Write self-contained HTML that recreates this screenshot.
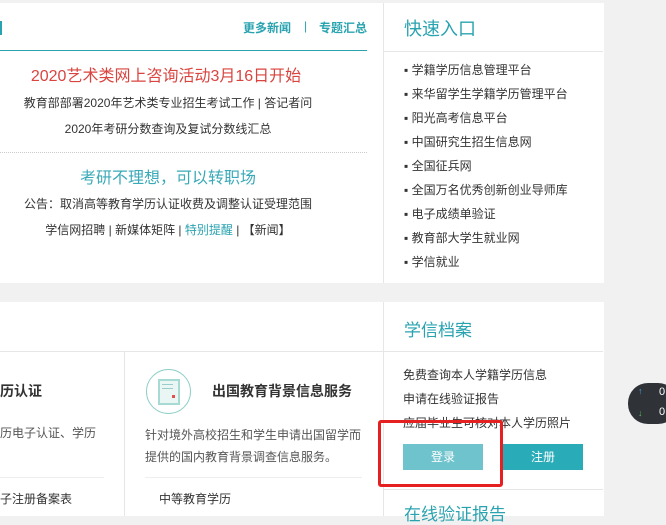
<!DOCTYPE html><html><head><meta charset="utf-8"><style>
body{margin:0;width:666px;height:516px;background:#f1f1f1;position:relative;overflow:hidden;font-family:"Liberation Sans","Noto Sans CJK SC",sans-serif;color:#333;font-size:12px}
.a{position:absolute;white-space:nowrap}
.w{position:absolute;background:#fff}
.c{text-align:center}
.t{color:#2aa3b0}
</style></head><body>
<div class="w" style="left:0;top:3px;width:383px;height:280px"></div>
<div class="w" style="left:383px;top:3px;width:220px;height:280px;border-left:1px solid #e6e6e6"></div>
<div class="a" style="left:0;top:21px;width:2px;height:14px;background:#2aa3b0"></div>
<div class="a t" style="left:243px;top:19px;font-size:12px;font-weight:bold">更多新闻</div>
<div class="a t" style="left:304px;top:19px">|</div>
<div class="a t" style="left:319px;top:19px;font-weight:bold">专题汇总</div>
<div class="a" style="left:0;top:50px;width:367px;height:1px;background:#2aa3b0"></div>
<div class="a c" style="left:0;width:332px;top:62px;font-size:16px;color:#d9443f">2020艺术类网上咨询活动3月16日开始</div>
<div class="a c" style="left:0;width:336px;top:94px">教育部部署2020年艺术类专业招生考试工作 | 答记者问</div>
<div class="a c" style="left:0;width:336px;top:120px">2020年考研分数查询及复试分数线汇总</div>
<div class="a" style="left:0;top:152px;width:367px;border-top:1px dotted #ccc"></div>
<div class="a c t" style="left:0;width:336px;top:164px;font-size:16px;color:#3aa9b8">考研不理想，可以转职场</div>
<div class="a c" style="left:0;width:336px;top:195px">公告：取消高等教育学历认证收费及调整认证受理范围</div>
<div class="a c" style="left:0;width:336px;top:221px">学信网招聘 | 新媒体矩阵 | <span class="t">特别提醒</span> | 【新闻】</div>
<div class="a t" style="left:404px;top:15px;font-size:18px">快速入口</div>
<div class="a" style="left:384px;top:51px;width:219px;height:1px;background:#e6e6e6"></div>
<div class="a" style="left:404px;top:58px;line-height:24px">
<div>▪ 学籍学历信息管理平台</div><div>▪ 来华留学生学籍学历管理平台</div><div>▪ 阳光高考信息平台</div><div>▪ 中国研究生招生信息网</div><div>▪ 全国征兵网</div><div>▪ 全国万名优秀创新创业导师库</div><div>▪ 电子成绩单验证</div><div>▪ 教育部大学生就业网</div><div>▪ 学信就业</div></div>

<div class="w" style="left:0;top:302px;width:383px;height:214px"></div>
<div class="w" style="left:383px;top:302px;width:220px;height:214px;border-left:1px solid #e6e6e6"></div>
<div class="a" style="left:0;top:351px;width:603px;height:1px;background:#e6e6e6"></div>
<div class="a" style="left:124px;top:352px;width:1px;height:164px;background:#e6e6e6"></div>
<div class="a" style="left:0;top:381px;font-size:14px;font-weight:bold">历认证</div>
<div class="a" style="left:0;top:424px;color:#555">历电子认证、学历</div>
<div class="a" style="left:0;top:477px;width:104px;height:1px;background:#eee"></div>
<div class="a" style="left:0;top:490px">子注册备案表</div>
<div class="a" style="left:146px;top:369px;width:43px;height:43px;border:1px solid #8fcfc8;border-radius:50%"></div>
<div class="a" style="left:158px;top:379px;width:18px;height:22px;border:2px solid #a8dad4;background:#eaf6f4"></div>
<div class="a" style="left:162px;top:384px;width:11px;height:1px;background:#9cc"></div>
<div class="a" style="left:162px;top:388px;width:11px;height:1px;background:#9cc"></div>
<div class="a" style="left:172px;top:395px;width:3px;height:3px;background:#e05050"></div>
<div class="a" style="left:212px;top:381px;font-size:14px;font-weight:bold">出国教育背景信息服务</div>
<div class="a" style="left:145px;top:424px;color:#555;line-height:22px">针对境外高校招生和学生申请出国留学而<br>提供的国内教育背景调查信息服务。</div>
<div class="a" style="left:145px;top:477px;width:217px;height:1px;background:#eee"></div>
<div class="a" style="left:159px;top:490px">中等教育学历</div>
<div class="a t" style="left:404px;top:316px;font-size:17px">学信档案</div>
<div class="a" style="left:403px;top:363px;line-height:24px"><div>免费查询本人学籍学历信息</div><div>申请在线验证报告</div><div>应届毕业生可核对本人学历照片</div></div>
<div class="a c" style="left:403px;top:444px;width:80px;height:26px;line-height:26px;background:#6fc3cc;color:#fff">登录</div>
<div class="a c" style="left:503px;top:444px;width:80px;height:26px;line-height:26px;background:#2aabb8;color:#fff">注册</div>
<div class="a" style="left:378px;top:420px;width:119px;height:61px;border:3px solid #e62020;border-radius:3px"></div>
<div class="a" style="left:384px;top:489px;width:219px;height:1px;background:#e6e6e6"></div>
<div class="a t" style="left:404px;top:500px;font-size:17px">在线验证报告</div>
<div class="a" style="left:628px;top:383px;width:50px;height:41px;background:#2f3237;border-radius:20px"></div>
<div class="a" style="left:638px;top:386px;color:#4aa8e0;font-size:9px">↑</div>
<div class="a" style="left:638px;top:408px;color:#5cb85c;font-size:9px">↓</div>
<div class="a" style="left:659px;top:386px;color:#fff;font-size:11px">0</div>
<div class="a" style="left:659px;top:406px;color:#fff;font-size:11px">0</div>
</body></html>
